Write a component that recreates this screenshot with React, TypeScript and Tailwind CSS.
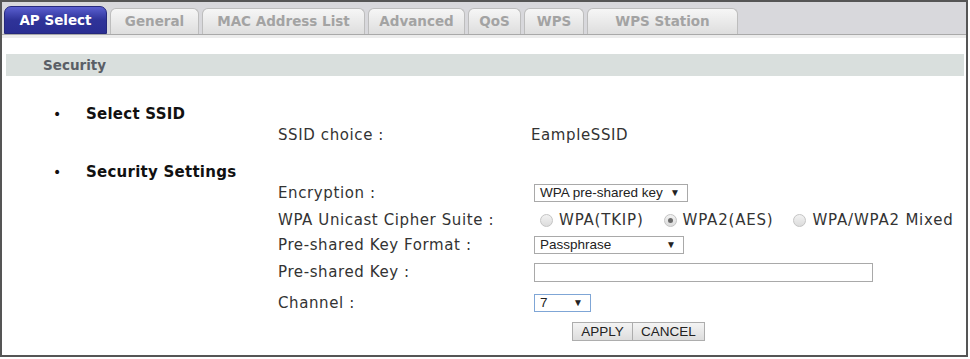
import React from "react";

const tabs = [
  { label: "AP Select", w: "w-[103px]", active: true },
  { label: "General", w: "w-[89px]" },
  { label: "MAC Address List", w: "w-[163px]" },
  { label: "Advanced", w: "w-[97px]" },
  { label: "QoS", w: "w-[53px]" },
  { label: "WPS", w: "w-[60px]" },
  { label: "WPS Station", w: "w-[151px]" },
];

function Radio({ checked }: { checked?: boolean }) {
  return (
    <span className="inline-flex w-[13px] h-[13px] rounded-full border border-[#c4c4c4] bg-gradient-to-b from-[#f2f2f2] to-[#dcdcdc] items-center justify-center mr-[6px]">
      {checked && <span className="w-[5px] h-[5px] rounded-full bg-[#6a6a6a]" />}
    </span>
  );
}

function Sel({ text, w, focus }: { text: string; w: string; focus?: boolean }) {
  return (
    <div
      className={`${w} h-[18px] flex items-center justify-between bg-white border ${
        focus ? "border-[#7fa6d6]" : "border-[#a9a9a9]"
      } pl-[5px] pr-[7px] text-[13.5px] text-[#222] font-['Liberation_Sans',Arial,sans-serif] leading-none`}
    >
      <span>{text}</span>
      <span className="text-[10px]">▼</span>
    </div>
  );
}

function Row({ label, children, mt }: { label: string; children?: React.ReactNode; mt: string }) {
  return (
    <div className={`${mt} h-[20px] flex items-center`}>
      <div className="w-[276px]" />
      <div className="w-[256px] text-[15px] tracking-[0.6px] text-[#333]">{label}</div>
      <div className="flex items-center">{children}</div>
    </div>
  );
}

function Heading({ label, mt }: { label: string; mt: string }) {
  return (
    <div className={`${mt} h-[20px] flex items-center`}>
      <div className="w-[84px] pl-[51px] text-[14px] text-[#111]">•</div>
      <div className="text-[15px] tracking-[0.25px] font-bold text-[#111]">{label}</div>
    </div>
  );
}

export default function App() {
  return (
    <div className="w-[970px] h-[359px] bg-white font-['DejaVu_Sans',Verdana,sans-serif]">
      <div className="w-[968px] h-[357px] border-2 border-[#555] flex flex-col">
        {/* Tab bar */}
        <div className="h-[33px] bg-[#d8d8dc] flex items-end pl-[2px] gap-[3px] border-b border-[#a9a9a9]">
          {tabs.map((t) =>
            t.active ? (
              <div
                key={t.label}
                className={`${t.w} h-[28px] rounded-t-[7px] bg-gradient-to-b from-[#5b5fd0] via-[#2f3399] to-[#2a2e92] border border-[#25287d] flex items-center justify-center text-white font-bold text-[13.5px]`}
              >
                {t.label}
              </div>
            ) : (
              <div
                key={t.label}
                className={`${t.w} h-[26px] rounded-t-[6px] bg-gradient-to-b from-[#f6f6f6] to-[#dedede] border border-[#bdbdbd] border-b-0 flex items-center justify-center text-[#a3a3a3] font-bold text-[13.5px]`}
              >
                {t.label}
              </div>
            )
          )}
        </div>
        <div className="h-[3px] bg-[#ececec]" />
        {/* Security bar */}
        <div className="mt-[16px] ml-[4px] mr-[2px] h-[22px] bg-[#d9dfdd] flex items-center pl-[37px] text-[13.5px] font-bold text-[#5a5e66]">
          Security
        </div>

        <Heading label="Select SSID" mt="mt-[28px]" />
        <Row label="SSID choice :" mt="mt-[1px]">
          <span className="text-[15px] tracking-[0.6px] text-[#333] ml-[-3px]">EampleSSID</span>
        </Row>
        <Heading label="Security Settings" mt="mt-[17px]" />
        <Row label="Encryption :" mt="mt-[1px]">
          <Sel text="WPA pre-shared key" w="w-[154px]" />
        </Row>
        <Row label="WPA Unicast Cipher Suite :" mt="mt-[7px]">
          <div className="flex items-center text-[15px] tracking-[0.8px] text-[#333] pl-[6px]">
            <Radio />
            <span className="mr-[20px]">WPA(TKIP)</span>
            <Radio checked />
            <span className="mr-[20px]">WPA2(AES)</span>
            <Radio />
            <span>WPA/WPA2 Mixed</span>
          </div>
        </Row>
        <Row label="Pre-shared Key Format :" mt="mt-[5px]">
          <Sel text="Passphrase" w="w-[150px]" />
        </Row>
        <Row label="Pre-shared Key :" mt="mt-[7px]">
          <div className="w-[339px] h-[19px] bg-white border border-[#a9a9a9]" />
        </Row>
        <Row label="Channel :" mt="mt-[11px]">
          <Sel text="7" w="w-[57px]" focus />
        </Row>
        <div className="mt-[9px] h-[19px] flex">
          <div className="w-[570px]" />
          <button className="w-[61px] h-[19px] border border-[#adadad] bg-gradient-to-b from-[#f4f4f4] to-[#dddddd] text-[13.5px] text-[#222] font-['Liberation_Sans',Arial,sans-serif] leading-none">
            APPLY
          </button>
          <button className="w-[72px] h-[19px] border border-l-0 border-[#adadad] bg-gradient-to-b from-[#f4f4f4] to-[#dddddd] text-[13.5px] text-[#222] font-['Liberation_Sans',Arial,sans-serif] leading-none">
            CANCEL
          </button>
        </div>
      </div>
    </div>
  );
}
